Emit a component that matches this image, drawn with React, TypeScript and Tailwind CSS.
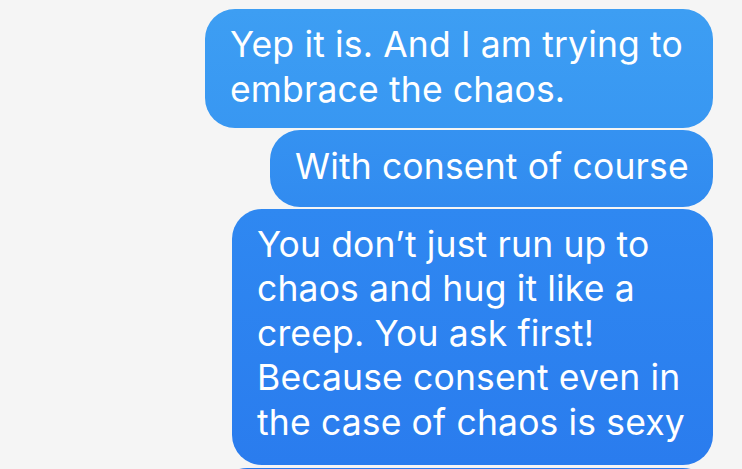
const messages = [
  {
    lines: ["Yep it is. And I am trying to", "embrace the chaos."],
    width: "w-[508px]",
    pad: "pt-[14px] pb-[16px]",
    color: "bg-gradient-to-b from-[#3d9ef3] to-[#3897f2]",
  },
  {
    lines: ["With consent of course"],
    width: "w-[443px]",
    pad: "pt-[15px] pb-[17px]",
    color: "bg-gradient-to-b from-[#3592f1] to-[#318bf0]",
  },
  {
    lines: [
      "You don\u2019t just run up to",
      "chaos and hug it like a",
      "creep. You ask first!",
      "Because consent even in",
      "the case of chaos is sexy",
    ],
    width: "w-[481px]",
    pad: "pt-[14px] pb-[20px]",
    color: "bg-gradient-to-b from-[#2f88f1] to-[#2a7cee]",
  },
];

function Bubble({
  lines,
  width,
  pad,
  color,
}: {
  lines: string[];
  width: string;
  pad: string;
  color: string;
}) {
  return (
    <div className={`${width} ${pad} ${color} rounded-[30px] px-[25px] text-white`}>
      {lines.map((l, i) => (
        <p
          key={i}
          className="whitespace-nowrap text-[35.5px] leading-[44.5px] tracking-[0.15px]"
        >
          {l}
        </p>
      ))}
    </div>
  );
}

export default function App() {
  return (
    <div
      className="h-[469px] w-[742px] overflow-hidden bg-[#f5f5f5] pt-[9px] pr-[29px]"
      style={{ fontFamily: "Inter, 'Liberation Sans', sans-serif" }}
    >
      <div className="flex flex-col items-end gap-[2px]">
        {messages.map((m, i) => (
          <Bubble key={i} {...m} />
        ))}
        <div className="mt-[1px] h-[60px] w-[496px] rounded-[30px] bg-[#2a7aee]" />
      </div>
    </div>
  );
}
